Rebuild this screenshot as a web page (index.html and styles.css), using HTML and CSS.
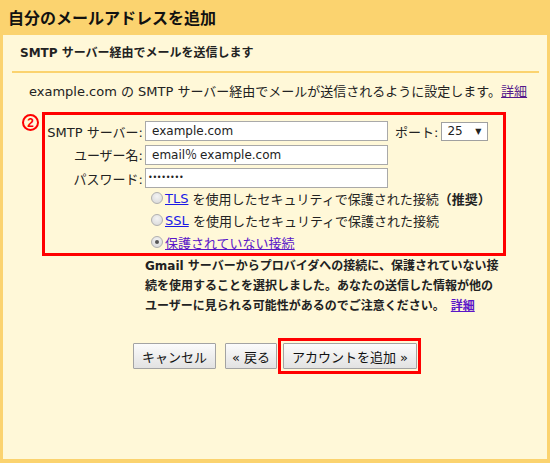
FILE: index.html
```html
<!DOCTYPE html>
<html lang="ja">
<head>
<meta charset="utf-8">
<title>自分のメールアドレスを追加</title>
<link rel="stylesheet" href="styles.css">
</head>
<body>
<div class="title">自分のメールアドレスを追加</div>
<div class="panel">
  <div class="sub">SMTP サーバー経由でメールを送信します</div>
  <div class="sep"></div>
  <p class="desc">example.com の SMTP サーバー経由でメールが送信されるように設定します。<a class="visited" href="#">詳細</a></p>
  <div class="formwrap">
    <div class="stepcol"><span class="step">2</span></div>
    <div class="redbox">
      <div class="row">
        <span class="label">SMTP サーバー:</span>
        <span class="field">example.com</span>
        <span class="port">ポート:</span>
        <span class="select">25<span class="arrow">▼</span></span>
      </div>
      <div class="row">
        <span class="label">ユーザー名:</span>
        <span class="field">email<span class="pct">％</span>example.com</span>
      </div>
      <div class="row">
        <span class="label">パスワード:</span>
        <span class="field pw">••••••••</span>
      </div>
      <div class="opt">
        <span class="radio"></span><a class="blue" href="#">TLS</a>&nbsp;を使用したセキュリティで保護された接続<b>（推奨）</b>
      </div>
      <div class="opt">
        <span class="radio"></span><a class="blue" href="#">SSL</a>&nbsp;を使用したセキュリティで保護された接続
      </div>
      <div class="opt">
        <span class="radio checked"></span><a class="violet" href="#">保護されていない接続</a>
      </div>
    </div>
  </div>
  <p class="warn">Gmail サーバーからプロバイダへの接続に、保護されていない接続を使用することを選択しました。あなたの送信した情報が他のユーザーに見られる可能性があるのでご注意ください。<a class="violet more" href="#">詳細</a></p>
  <div class="buttons">
    <button class="btn cancel">キャンセル</button>
    <button class="btn back">« 戻る</button>
    <div class="hl"><button class="btn add">アカウントを追加 »</button></div>
  </div>
</div>
</body>
</html>
```
FILE: styles.css
```css
html, body {
  margin: 0;
  padding: 0;
}
body {
  width: 550px;
  height: 463px;
  overflow: hidden;
  background: #fbd36f;
  font-family: "DejaVu Sans", "Noto Sans CJK JP", sans-serif;
  color: #222;
}
.title {
  height: 35px;
  line-height: 35px;
  padding-left: 8px;
  font-size: 16px;
  font-weight: bold;
  font-family: "Noto Sans CJK JP", sans-serif;
  color: #111;
}
.panel {
  margin: 0 3px;
  height: 424px;
  background: #fff8d8;
  overflow: hidden;
}
.sub {
  height: 36px;
  line-height: 36px;
  padding-left: 17px;
  font-size: 12px;
  font-weight: bold;
}
.sep {
  height: 2px;
  margin: 0 8px 0 9px;
  background: #fbd36f;
}
.desc {
  margin: 9px 0 0;
  padding-left: 26px;
  line-height: 20px;
  font-size: 13px;
}
a.visited { color: #551a8b; }
a.blue { color: #1a1ae6; }
a.violet { color: #5a16c8; }
.formwrap {
  display: flex;
  margin-top: 10px;
  padding-left: 19px;
}
.stepcol {
  width: 20px;
}
.step {
  box-sizing: border-box;
  margin-top: 2px;
  width: 17px;
  height: 17px;
  border: 2px solid #f00;
  border-radius: 50%;
  display: flex;
  align-items: center;
  justify-content: center;
  font-family: "Liberation Sans", sans-serif;
  font-weight: bold;
  font-size: 12px;
  line-height: 1;
  color: #f00;
}
.redbox {
  box-sizing: border-box;
  width: 464px;
  height: 144px;
  border: 3px solid #f00;
  padding-top: 6px;
  display: flex;
  flex-direction: column;
  font-size: 13px;
}
.row {
  display: flex;
  align-items: center;
  height: 20px;
  margin-bottom: 3.5px;
}
.row:nth-child(3) { margin-bottom: -1px; }
.label {
  width: 98px;
  text-align: right;
  white-space: nowrap;
}
.field {
  box-sizing: border-box;
  margin-left: 2px;
  width: 243px;
  height: 20px;
  line-height: 18px;
  border: 1px solid #a9a9a9;
  background: #fff;
  padding-left: 6px;
  font-size: 12px;
  color: #222;
}
.pct {
  margin-right: 3px;
}
.field.pw {
  padding-left: 2px;
  font-size: 8px;
  letter-spacing: -0.3px;
}
.port {
  margin-left: 7px;
}
.select {
  box-sizing: border-box;
  margin-left: 3px;
  width: 47px;
  height: 19px;
  line-height: 17px;
  border: 1px solid #a0a0a0;
  background: #fff;
  padding-left: 5px;
  font-size: 12px;
  display: flex;
  justify-content: space-between;
}
.arrow {
  font-size: 8px;
  padding-right: 6px;
}
.opt {
  display: flex;
  align-items: center;
  height: 22.5px;
  padding-left: 106px;
  white-space: nowrap;
}
.radio {
  box-sizing: border-box;
  width: 12px;
  height: 12px;
  margin-right: 2px;
  border-radius: 50%;
  border: 1px solid #b0b0b0;
  background: radial-gradient(circle at 50% 35%, #f4f4f4, #d6d6d6);
  position: relative;
}
.radio.checked::after {
  content: "";
  position: absolute;
  left: 3px;
  top: 3px;
  width: 4px;
  height: 4px;
  border-radius: 50%;
  background: #555;
}
.warn {
  margin: 0;
  padding-left: 142px;
  width: 356px;
  font-size: 12px;
  line-height: 20px;
  font-weight: bold;
}
.more {
  margin-left: 6px;
}
.buttons {
  display: flex;
  align-items: center;
  margin-top: 22px;
  padding-left: 130px;
}
.btn {
  box-sizing: border-box;
  height: 26px;
  padding: 0;
  border: 1px solid #a3a3a3;
  border-radius: 1px;
  background: linear-gradient(#fbfbfb, #e2e2e2);
  font-family: "DejaVu Sans", "Noto Sans CJK JP", sans-serif;
  font-size: 13px;
  color: #111;
}
.cancel { width: 83px; }
.back { width: 52px; margin-left: 9px; }
.hl {
  margin-left: 1px;
  border: 3px solid #f00;
  padding: 2px 1px 2px 2px;
  display: flex;
}
.add { width: 134px; height: 26px; }
```
